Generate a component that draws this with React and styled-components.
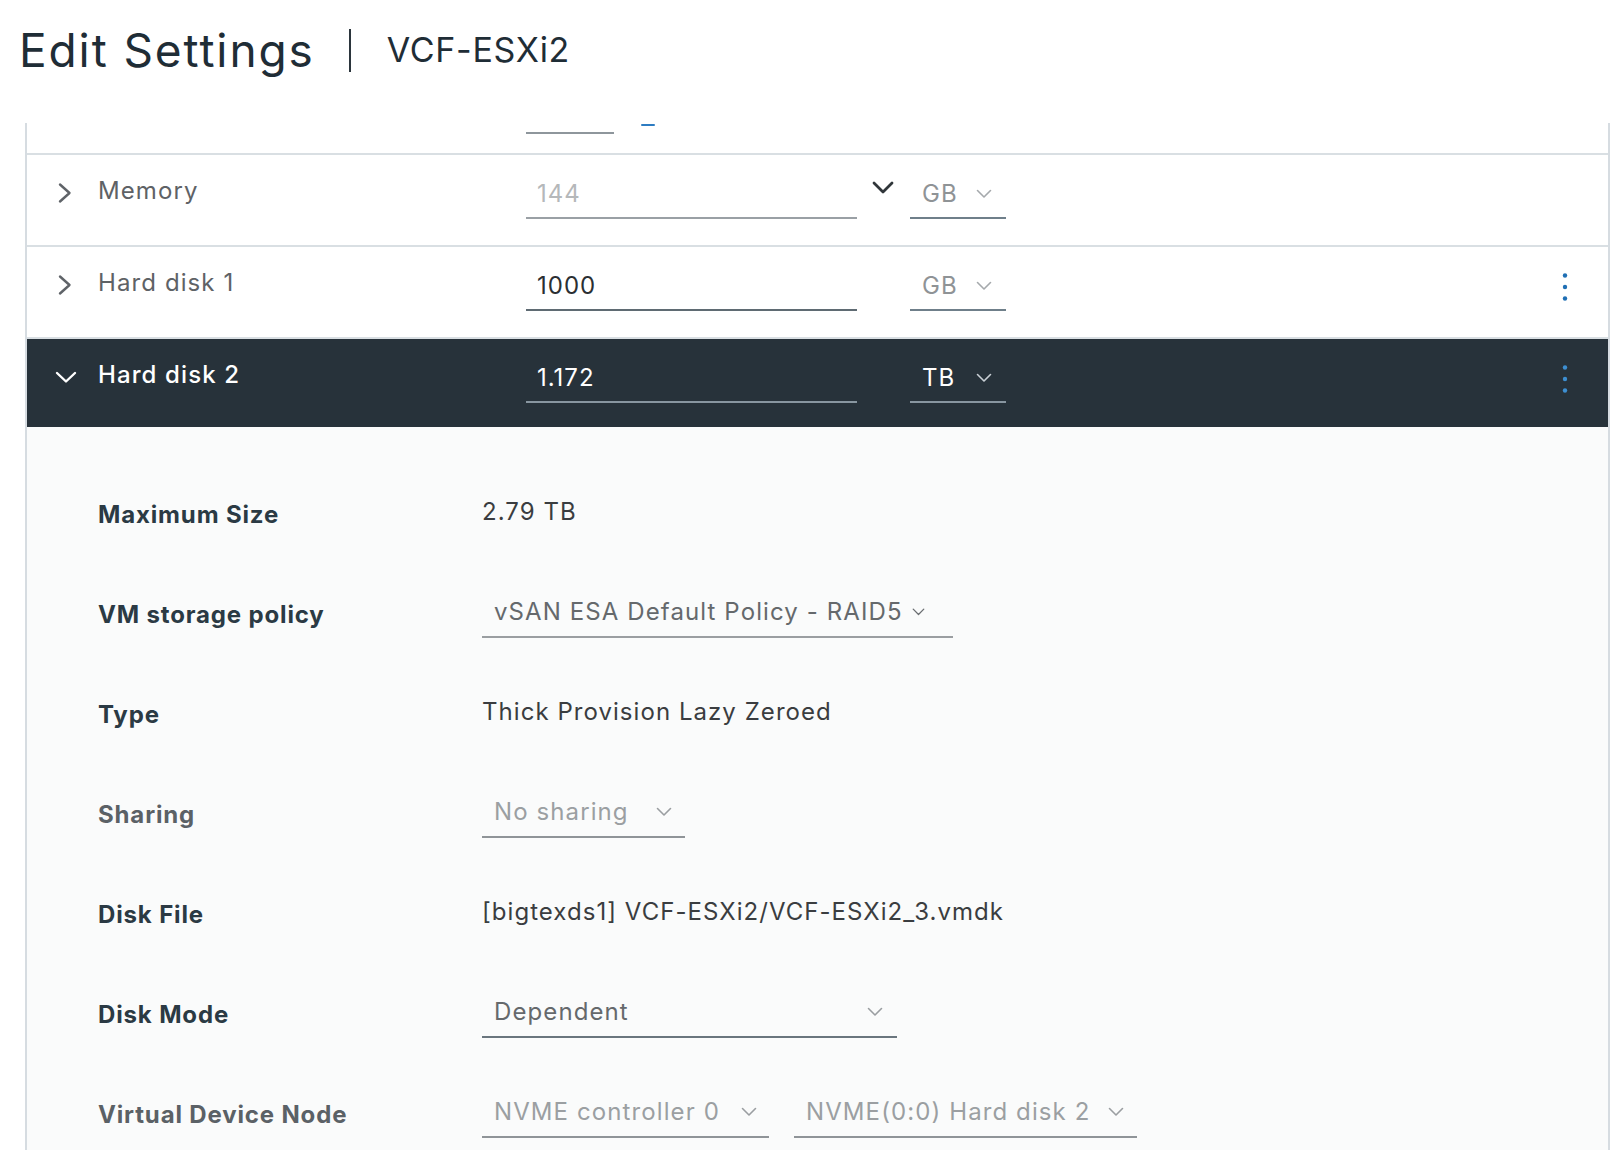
import React from 'react';
import styled, { createGlobalStyle } from 'styled-components';

const Global = createGlobalStyle`
  html, body { margin: 0; padding: 0; background: #ffffff; }
  body { font-family: Inter, "Noto Sans", sans-serif; color: #313131; }
  * { box-sizing: border-box; }
`;

const Page = styled.div`
  width: 1610px;
  height: 1150px;
  overflow: hidden;
  display: flex;
  flex-direction: column;
`;

const Header = styled.header`
  height: 123px;
  flex: none;
  display: flex;
  align-items: flex-start;
  padding: 22px 0 0 19px;
`;

const Title = styled.h1`
  margin: 0;
  font-size: 46px;
  font-weight: 400;
  line-height: 56px;
  color: #1f2d36;
  letter-spacing: 1.9px;
`;

const TitleSep = styled.span`
  width: 2px;
  height: 43px;
  background: #2b353c;
  margin: 7px 36px 0 34px;
`;

const Subtitle = styled.span`
  font-size: 34px;
  line-height: 56px;
  color: #1f2d36;
  letter-spacing: 0.7px;
`;

const Panel = styled.div`
  width: 1585px;
  margin-left: 25px;
  flex: 1;
  border-left: 2px solid #d6dce1;
  border-right: 2px solid #d6dce1;
  display: flex;
  flex-direction: column;
`;

const PartialRow = styled.div`
  height: 32px;
  flex: none;
  border-bottom: 2px solid #d9dfe3;
  display: flex;
  align-items: flex-start;
  padding-left: 499px;
`;

const PartialInput = styled.span`
  width: 88px;
  height: 11px;
  border-bottom: 2px solid #8e969c;
`;

const BlueMark = styled.span`
  width: 14px;
  height: 2px;
  margin: 1px 0 0 27px;
  background: #2d7cc2;
  border-radius: 1px;
`;

const Row = styled.div`
  height: ${p => (p.$dark ? 88 : 92)}px;
  flex: none;
  display: flex;
  align-items: flex-start;
  padding-top: 22px;
  background: ${p => (p.$dark ? '#27323a' : '#ffffff')};
  border-bottom: ${p => (p.$dark ? 'none' : '2px solid #d9dfe3')};
  letter-spacing: 1px;
`;

const Toggle = styled.span`
  width: 71px;
  height: 28px;
  flex: none;
  display: flex;
  align-items: center;
  padding: 3px 0 0 ${p => (p.$open ? 27 : 25)}px;
  svg { display: block; }
`;

const RowLabel = styled.span`
  width: 428px;
  flex: none;
  font-size: 24px;
  line-height: 28px;
  font-weight: ${p => (p.$dark ? 500 : 400)};
  letter-spacing: 1.1px;
  color: ${p => (p.$dark ? '#ffffff' : '#5e6266')};
`;

const SizeInput = styled.span`
  width: 331px;
  flex: none;
  padding: 3px 11px 9px;
  font-size: 24px;
  line-height: 28px;
  color: ${p => (p.$disabled ? '#b5b8ba' : p.$dark ? '#ffffff' : '#2b2f33')};
  border-bottom: 2px solid ${p => (p.$disabled ? '#9aa0a5' : p.$dark ? '#8896a0' : '#5f6b73')};
`;

const SpinCell = styled.span`
  width: 53px;
  height: 28px;
  flex: none;
  padding: 3px 0 0 14px;
  svg { display: block; }
`;

const UnitSelect = styled.span`
  width: 96px;
  flex: none;
  display: flex;
  align-items: center;
  justify-content: space-between;
  padding: 3px 14px 9px 12px;
  font-size: 24px;
  line-height: 28px;
  color: ${p => (p.$dark ? '#ffffff' : '#8f9396')};
  border-bottom: 2px solid ${p => (p.$dark ? '#8896a0' : '#6f7f8a')};
  svg { display: block; }
`;

const Kebab = styled.span`
  margin: 0 39px 0 auto;
  height: 36px;
  display: flex;
  align-items: center;
  svg { display: block; }
`;

const Details = styled.div`
  flex: 1;
  background: #fafbfb;
  padding-top: 38px;
`;

const DetailRow = styled.div`
  height: 100px;
  display: flex;
  align-items: flex-start;
  padding: 36px 0 0 71px;
`;

const DetailLabel = styled.span`
  width: 384px;
  flex: none;
  font-size: 24px;
  line-height: 28px;
  font-weight: 700;
  letter-spacing: 0.85px;
  color: ${p => (p.$muted ? '#5b6166' : '#2b3a44')};
`;

const Value = styled.span`
  margin-top: -3px;
  font-size: 24px;
  line-height: 28px;
  letter-spacing: 1.05px;
  color: #3a3d40;
`;

const SelectGroup = styled.span`
  display: flex;
  gap: 25px;
  margin-top: -3px;
`;

const Select = styled.span`
  width: ${p => p.$w}px;
  flex: none;
  display: flex;
  align-items: center;
  justify-content: ${p => (p.$tight ? 'flex-start' : 'space-between')};
  gap: 9px;
  padding: 0 ${p => p.$pr || 13}px 10px 12px;
  font-size: 24px;
  line-height: 28px;
  letter-spacing: 1.1px;
  white-space: nowrap;
  color: ${p => (p.$disabled ? '#9b9fa2' : '#65696c')};
  border-bottom: 2px solid ${p => (p.$disabled ? '#8f9498' : p.$strong ? '#6a767e' : '#9a9ea1')};
  svg { display: block; flex: none; }
`;

const ChevronRight = () => (
  <svg width="24" height="24" viewBox="0 0 24 24" fill="none">
    <path d="M8 3.5 L17.5 12 L8 20.5" stroke="#5f6368" strokeWidth="2.4" strokeLinecap="round" strokeLinejoin="round" />
  </svg>
);

const ChevronDownWhite = () => (
  <svg width="24" height="24" viewBox="0 0 24 24" fill="none">
    <path d="M3 8 L12 16.5 L21 8" stroke="#ffffff" strokeWidth="2.4" strokeLinecap="round" strokeLinejoin="round" />
  </svg>
);

const SpinArrow = () => (
  <svg width="24" height="16" viewBox="0 0 24 16" fill="none">
    <path d="M3 3 L12 12 L21 3" stroke="#30363a" strokeWidth="2.8" strokeLinecap="round" strokeLinejoin="round" />
  </svg>
);

const Caret = ({ color = '#9a9ea1', w = 16 }) => (
  <svg width={w} height="10" viewBox="0 0 16 10" fill="none">
    <path d="M1.5 1.5 L8 8 L14.5 1.5" stroke={color} strokeWidth="1.6" strokeLinecap="round" strokeLinejoin="round" />
  </svg>
);

const Dots = ({ color }) => (
  <svg width="8" height="32" viewBox="0 0 8 32">
    <circle cx="4" cy="4.5" r="2.2" fill={color} />
    <circle cx="4" cy="16" r="2.2" fill={color} />
    <circle cx="4" cy="27.5" r="2.2" fill={color} />
  </svg>
);

export default function App() {
  return (
    <Page>
      <Global />
      <Header>
        <Title>Edit Settings</Title>
        <TitleSep />
        <Subtitle>VCF-ESXi2</Subtitle>
      </Header>
      <Panel>
        <PartialRow>
          <PartialInput />
          <BlueMark />
        </PartialRow>

        <Row>
          <Toggle><ChevronRight /></Toggle>
          <RowLabel>Memory</RowLabel>
          <SizeInput $disabled>144</SizeInput>
          <SpinCell><SpinArrow /></SpinCell>
          <UnitSelect>GB <Caret color="#a5a9ac" /></UnitSelect>
        </Row>

        <Row>
          <Toggle><ChevronRight /></Toggle>
          <RowLabel>Hard disk 1</RowLabel>
          <SizeInput>1000</SizeInput>
          <SpinCell />
          <UnitSelect>GB <Caret color="#a5a9ac" /></UnitSelect>
          <Kebab><Dots color="#1f6fb4" /></Kebab>
        </Row>

        <Row $dark>
          <Toggle $open><ChevronDownWhite /></Toggle>
          <RowLabel $dark>Hard disk 2</RowLabel>
          <SizeInput $dark>1.172</SizeInput>
          <SpinCell />
          <UnitSelect $dark>TB <Caret color="#c9d0d5" /></UnitSelect>
          <Kebab><Dots color="#3d8fd1" /></Kebab>
        </Row>

        <Details>
          <DetailRow>
            <DetailLabel>Maximum Size</DetailLabel>
            <Value>2.79 TB</Value>
          </DetailRow>
          <DetailRow>
            <DetailLabel>VM storage policy</DetailLabel>
            <SelectGroup>
              <Select $w={471} $tight>vSAN ESA Default Policy - RAID5 <Caret color="#6a6e71" w={13} /></Select>
            </SelectGroup>
          </DetailRow>
          <DetailRow>
            <DetailLabel>Type</DetailLabel>
            <Value>Thick Provision Lazy Zeroed</Value>
          </DetailRow>
          <DetailRow>
            <DetailLabel $muted>Sharing</DetailLabel>
            <SelectGroup>
              <Select $w={203} $disabled>No sharing <Caret /></Select>
            </SelectGroup>
          </DetailRow>
          <DetailRow>
            <DetailLabel>Disk File</DetailLabel>
            <Value>[bigtexds1] VCF-ESXi2/VCF-ESXi2_3.vmdk</Value>
          </DetailRow>
          <DetailRow>
            <DetailLabel>Disk Mode</DetailLabel>
            <SelectGroup>
              <Select $w={415} $strong $pr={14}>Dependent <Caret /></Select>
            </SelectGroup>
          </DetailRow>
          <DetailRow>
            <DetailLabel $muted>Virtual Device Node</DetailLabel>
            <SelectGroup>
              <Select $w={287} $disabled $pr={12}>NVME controller 0 <Caret /></Select>
              <Select $w={343} $disabled $pr={13}>NVME(0:0) Hard disk 2 <Caret /></Select>
            </SelectGroup>
          </DetailRow>
        </Details>
      </Panel>
    </Page>
  );
}
